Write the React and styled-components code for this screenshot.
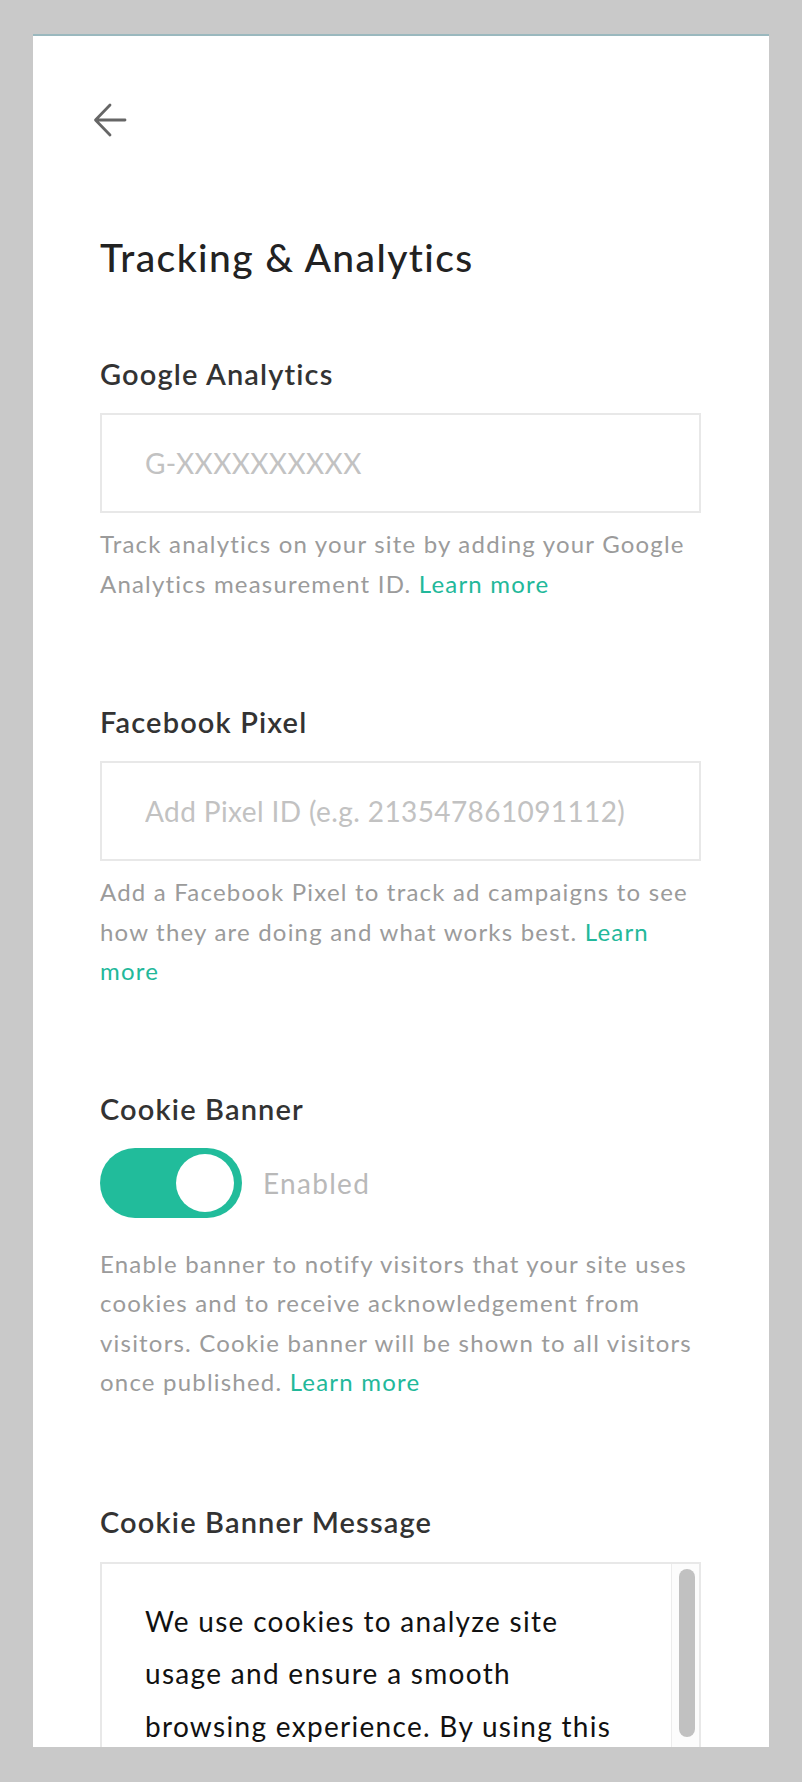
import React from 'react';
import styled, { createGlobalStyle } from 'styled-components';

const GlobalStyle = createGlobalStyle`
  html, body {
    margin: 0;
    padding: 0;
    background: #c9c9c9;
  }
  body {
    font-family: Lato, "Open Sans", sans-serif;
    -webkit-font-smoothing: antialiased;
  }
`;

const Page = styled.div`
  height: 1782px;
  padding: 34px 0 0 33px;
  box-sizing: border-box;
`;

const Panel = styled.div`
  width: 736px;
  height: 1713px;
  box-sizing: border-box;
  background: #fff;
  border-top: 2px solid #9ab8be;
  padding: 0 68px 0 67px;
  overflow: hidden;
`;

const BackButton = styled.button`
  display: block;
  margin: 67px 0 0 -7px;
  padding: 0;
  width: 34px;
  height: 34px;
  border: 0;
  background: none;
  cursor: pointer;
`;

const Title = styled.h1`
  margin: 97px 0 0;
  font-size: 39px;
  line-height: 46px;
  font-weight: 500;
  color: #222;
  letter-spacing: 1.4px;
`;

const Section = styled.section`
  margin-top: ${p => p.$gap}px;
`;

const Label = styled.div`
  font-size: 29px;
  line-height: 34px;
  font-weight: 600;
  color: #333;
  letter-spacing: 1.15px;
`;

const TextInput = styled.input`
  display: block;
  width: 100%;
  height: 100px;
  margin-top: 22px;
  box-sizing: border-box;
  border: 2px solid #e8e8e8;
  padding: 0 20px 0 43px;
  font-family: inherit;
  font-size: 28px;
  letter-spacing: 0.4px;
  color: #333;
  outline: none;
  &::placeholder {
    color: #c2c2c2;
  }
`;

const Help = styled.p`
  max-width: 596px;
  margin: ${p => p.$top}px 0 0;
  font-size: 24px;
  line-height: 39.5px;
  letter-spacing: 1.2px;
  color: #9b9b9b;
  a {
    color: #22b89a;
    text-decoration: none;
  }
`;

const ToggleRow = styled.div`
  display: flex;
  align-items: center;
  gap: 21px;
  margin-top: 22px;
`;

const Switch = styled.button`
  position: relative;
  width: 142px;
  height: 70px;
  padding: 0;
  border: 0;
  border-radius: 35px;
  background: ${p => (p.$on ? '#21bc9b' : '#d6d6d6')};
  cursor: pointer;
`;

const Knob = styled.span`
  position: absolute;
  top: 6px;
  left: ${p => (p.$on ? 76 : 8)}px;
  width: 58px;
  height: 58px;
  border-radius: 50%;
  background: #fff;
`;

const ToggleText = styled.span`
  font-size: 28px;
  line-height: 34px;
  letter-spacing: 1.3px;
  color: #b9b9b9;
`;

const MessageBox = styled.div`
  display: flex;
  margin-top: 23px;
  height: 260px;
  border: 2px solid #e8e8e8;
  border-bottom: 0;
`;

const MessageText = styled.div`
  flex: 1;
  padding: 31px 51px 0 43px;
  font-size: 28px;
  line-height: 52.5px;
  letter-spacing: 1.3px;
  color: #111;
`;

const ScrollTrack = styled.div`
  width: 28px;
  border-left: 1px solid #ececec;
  padding: 5px 0 0 7px;
  box-sizing: border-box;
  background: #fcfcfc;
`;

const ScrollThumb = styled.div`
  width: 16px;
  height: 168px;
  border-radius: 8px;
  background: #c1c1c1;
`;

function ArrowLeft() {
  return (
    <svg width="34" height="34" viewBox="0 0 34 34" fill="none">
      <path
        d="M32 17H3M17 2L2.5 17L17 32"
        stroke="#666"
        strokeWidth="2.8"
        strokeLinecap="round"
        strokeLinejoin="round"
      />
    </svg>
  );
}

export default function App() {
  const [cookieOn, setCookieOn] = React.useState(true);

  return (
    <>
      <GlobalStyle />
      <Page>
        <Panel>
          <BackButton aria-label="Back">
            <ArrowLeft />
          </BackButton>
          <Title>Tracking &amp; Analytics</Title>

          <Section $gap={77}>
            <Label>Google Analytics</Label>
            <TextInput placeholder="G-XXXXXXXXXX" />
            <Help $top={11}>
              Track analytics on your site by adding your Google Analytics
              measurement ID. <a href="#">Learn more</a>
            </Help>
          </Section>

          <Section $gap={102}>
            <Label>Facebook Pixel</Label>
            <TextInput placeholder="Add Pixel ID (e.g. 213547861091112)" />
            <Help $top={11}>
              Add a Facebook Pixel to track ad campaigns to see how they are
              doing and what works best. <a href="#">Learn more</a>
            </Help>
          </Section>

          <Section $gap={101}>
            <Label>Cookie Banner</Label>
            <ToggleRow>
              <Switch $on={cookieOn} onClick={() => setCookieOn(!cookieOn)} aria-label="Cookie banner">
                <Knob $on={cookieOn} />
              </Switch>
              <ToggleText>{cookieOn ? 'Enabled' : 'Disabled'}</ToggleText>
            </ToggleRow>
            <Help $top={26}>
              Enable banner to notify visitors that your site uses cookies and to
              receive acknowledgement from visitors. Cookie banner will be shown
              to all visitors once published. <a href="#">Learn more</a>
            </Help>
          </Section>

          <Section $gap={103}>
            <Label>Cookie Banner Message</Label>
            <MessageBox>
              <MessageText>
                We use cookies to analyze site usage and ensure a smooth browsing
                experience. By using this site, you agree to our use of cookies.
              </MessageText>
              <ScrollTrack>
                <ScrollThumb />
              </ScrollTrack>
            </MessageBox>
          </Section>
        </Panel>
      </Page>
    </>
  );
}
